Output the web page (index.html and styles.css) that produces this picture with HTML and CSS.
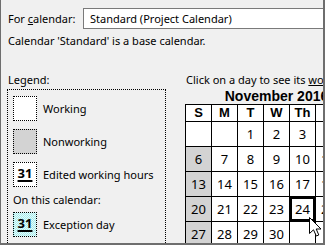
FILE: index.html
```html
<!DOCTYPE html>
<html lang="en">
<head>
<meta charset="UTF-8">
<title>Change Working Time</title>
<link rel="stylesheet" href="styles.css">
</head>
<body>

  <div class="dialog">
    <div class="for-row">
      <span class="for-label">For <u>c</u>alendar:</span>
      <div class="combo">Standard (Project Calendar)</div>
    </div>
    <p class="note">Calendar 'Standard' is a base calendar.</p>

    <div class="panes">
      <div class="legend">
        <div class="legend-title">Legend:</div>
        <div class="legend-box">
          <div class="legend-item">
            <span class="swatch"></span>
            <span>Working</span>
          </div>
          <div class="legend-item">
            <span class="swatch swatch-off"></span>
            <span>Nonworking</span>
          </div>
          <div class="legend-item">
            <span class="swatch swatch-num">31</span>
            <span>Edited working hours</span>
          </div>
          <div class="legend-sub">On this calendar:</div>
          <div class="legend-item">
            <span class="swatch swatch-num swatch-exc">31</span>
            <span>Exception day</span>
          </div>
        </div>
      </div>

      <div class="cal">
        <div class="cal-hint">Click on a day to see its <u>wo</u>rking times:</div>
        <div class="cal-month">November 2016</div>
        <div class="cal-grid">
          <div class="hd">S</div><div class="hd">M</div><div class="hd">T</div><div class="hd">W</div><div class="hd">Th</div><div class="hd">F</div><div class="hd">S</div>

          <div></div><div></div><div>1</div><div>2</div><div>3</div><div>4</div><div>5</div>
          <div class="sun">6</div><div>7</div><div>8</div><div>9</div><div>10</div><div>11</div><div>12</div>
          <div class="sun">13</div><div>14</div><div>15</div><div>16</div><div>17</div><div>18</div><div>19</div>
          <div class="sun">20</div><div>21</div><div>22</div><div>23</div><div class="sel">24</div><div>25</div><div>26</div>
          <div class="sun">27</div><div>28</div><div>29</div><div>30</div><div></div><div></div><div></div>
        </div>
        <svg class="pointer" width="13" height="20" viewBox="0 0 13 20">
          <polygon points="0.5,0.5 0.5,16.5 4.5,12.8 7.3,19 9.8,18 7.2,12 12,12" fill="#fff" stroke="#000" stroke-width="1"/>
        </svg>
      </div>
    </div>
  </div>

</body>
</html>
```

FILE: styles.css
```css
* {
  box-sizing: border-box;
  margin: 0;
  padding: 0;
}

body {
  font-family: "Noto Sans", Arial, sans-serif;
  font-size: 11px;
  line-height: 16px;
  color: #000;
  background-color: #f0f0f0;
}

/* Dialog frame */

.dialog {
  width: 325px;
  height: 245px;
  overflow: hidden;
  border-left: 1px solid #6e6e6e;
  border-right: 2px solid #6e6e6e;
  border-bottom: 2px solid #6e6e6e;
  padding: 8px 0 0 6px;
}

.for-row {
  display: flex;
  align-items: center;
}

.for-label {
  width: 76px;
  flex-shrink: 0;
  padding-left: 1px;
}

.combo {
  flex: 1;
  height: 21px;
  margin-right: -6px;
  padding: 2px 0 0 6px;
  background-color: #fff;
  border: 1px solid #7a7a7a;
  white-space: nowrap;
}

.note {
  margin-top: 4px;
  padding-left: 1px;
}

/* Panes */

.panes {
  display: flex;
  margin-top: 23px;
}

.legend {
  width: 159px;
  flex-shrink: 0;
}

.legend-title {
  padding-left: 1px;
}

.legend-box {
  margin-top: 1px;
  height: 200px;
  border: 1px dotted #000;
  padding: 6px 0 0 5px;
}

.legend-item {
  display: flex;
  align-items: center;
  gap: 6px;
  margin-bottom: 8px;
}

.legend-sub {
  margin: -3px 0 4px;
}

.swatch {
  width: 24px;
  height: 25px;
  flex-shrink: 0;
  border: 1px dotted #000;
  background-color: #fff;
}

.swatch-off {
  background-color: #d3d3d3;
}

.swatch-num {
  font-weight: bold;
  font-size: 13px;
  line-height: 13px;
  text-align: center;
  text-decoration: underline;
  text-decoration-thickness: 2px;
  text-underline-offset: 2px;
  padding-top: 4px;
}

.swatch-exc {
  background-color: #c4f2f2;
  background-image: repeating-conic-gradient(#a8ecec 0 25%, #e4fafa 0 50%);
  background-size: 2px 2px;
}

/* Calendar */

.cal {
  position: relative;
  margin-left: 19px;
}

.cal-hint {
  white-space: nowrap;
  padding-left: 1px;
}

.cal-month {
  width: 183px;
  text-align: center;
  font-family: "Liberation Sans", Arial, sans-serif;
  font-weight: bold;
  font-size: 14px;
}

.cal-grid {
  display: grid;
  grid-template-columns: repeat(7, 25px);
  grid-template-rows: 16px repeat(5, 24px);
  gap: 1px;
  padding: 1px;
  width: 183px;
  background-color: #000;
}

.cal-grid div {
  background-color: #fff;
  display: flex;
  align-items: center;
  justify-content: center;
  font-size: 13px;
}

.cal-grid .hd {
  font-family: "Liberation Sans", Arial, sans-serif;
  font-weight: bold;
  font-size: 13px;
}

.cal-grid .sun {
  background-color: #d3d3d3;
}

.cal-grid .sel {
  box-shadow: inset 0 0 0 2px #000;
}

.pointer {
  position: absolute;
  left: 124px;
  top: 145px;
}
```
